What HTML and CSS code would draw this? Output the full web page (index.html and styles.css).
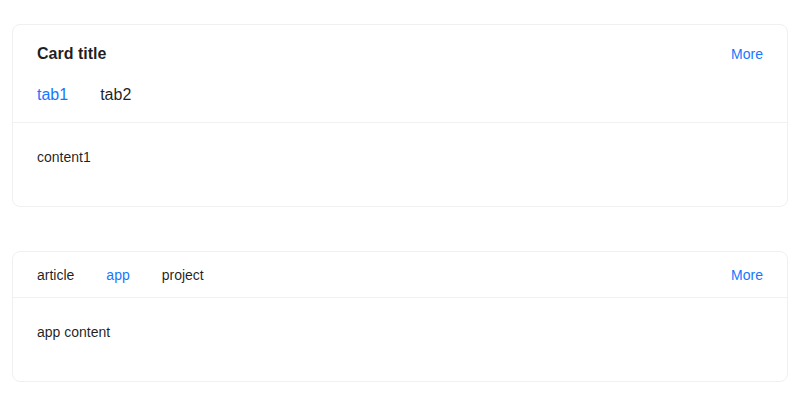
FILE: index.html
```html
<!DOCTYPE html>
<html lang="en">
<head>
<meta charset="utf-8">
<title>Cards</title>
<link rel="stylesheet" href="styles.css">
</head>
<body>
<div class="page">
  <section class="card">
    <div class="card-head card-head-tall">
      <div class="head-row">
        <div class="card-title">Card title</div>
        <a class="more" href="#">More</a>
      </div>
      <div class="tabs tabs-large">
        <div class="tab active">tab1</div>
        <div class="tab">tab2</div>
      </div>
    </div>
    <div class="card-body">content1</div>
  </section>

  <section class="card">
    <div class="card-head card-head-tabs">
      <div class="tabs">
        <div class="tab">article</div>
        <div class="tab active">app</div>
        <div class="tab">project</div>
      </div>
      <a class="more" href="#">More</a>
    </div>
    <div class="card-body">app content</div>
  </section>
</div>
</body>
</html>
```

FILE: styles.css
```css
* { box-sizing: border-box; }
html, body { margin: 0; padding: 0; background: #fff; }
body {
  font-family: "Liberation Sans", Arial, sans-serif;
  font-size: 14px;
  line-height: 22px;
  color: rgba(0, 0, 0, 0.88);
}
.page {
  padding: 24px 12px;
  display: flex;
  flex-direction: column;
  gap: 44px;
}
.card {
  border: 1px solid #f0f0f0;
  border-radius: 8px;
  background: #fff;
}
.card-head {
  padding: 0 24px;
  border-bottom: 1px solid #f0f0f0;
}
.head-row {
  display: flex;
  justify-content: space-between;
  align-items: baseline;
  padding-top: 17px;
}
.card-title {
  font-size: 16px;
  line-height: 24px;
  font-weight: 700;
}
.more {
  color: #1677ff;
  text-decoration: none;
  font-size: 14px;
  line-height: 22px;
}
.tabs {
  display: flex;
  gap: 32px;
}
.tab {
  color: rgba(0, 0, 0, 0.88);
}
.tab.active {
  color: #1677ff;
}
.tabs-large .tab {
  font-size: 16px;
  line-height: 24px;
  padding: 17px 0 15px;
}
.card-head-tabs {
  display: flex;
  justify-content: space-between;
  align-items: baseline;
  padding-top: 12px;
  padding-bottom: 11px;
}
.card-body {
  padding: 23px 24px 38px;
}
```
